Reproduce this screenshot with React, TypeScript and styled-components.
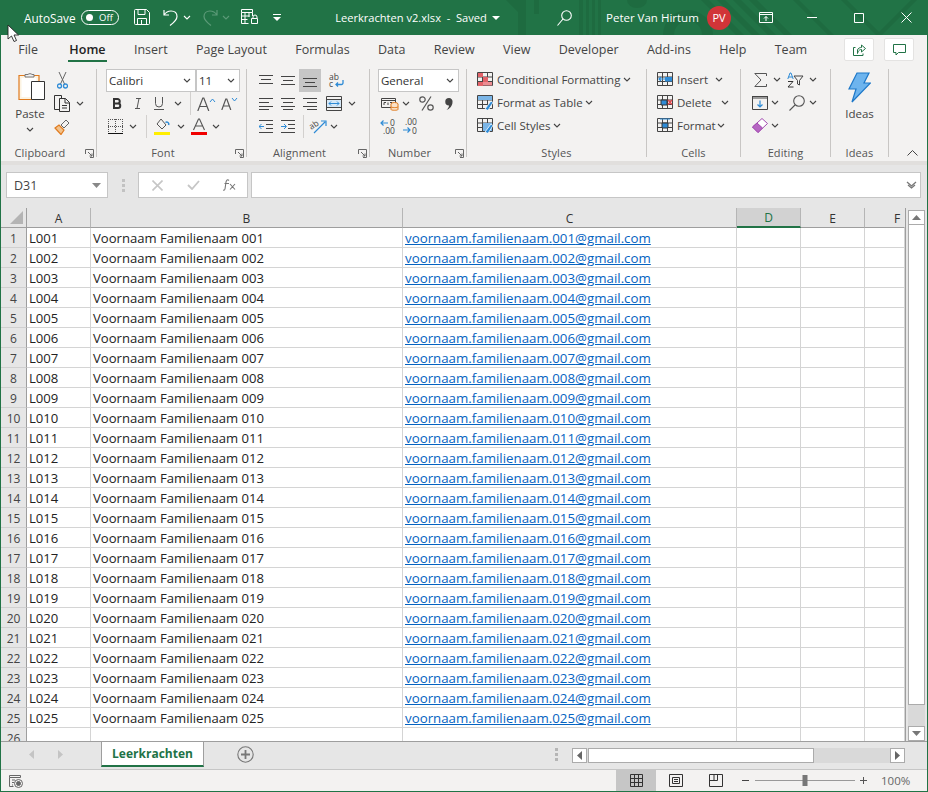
import React from "react";
import styled, { createGlobalStyle } from "styled-components";

const Global = createGlobalStyle`
  html, body { margin: 0; padding: 0; background: #217346; }
  * { box-sizing: border-box; }
`;
const GREEN = "#217346";
const INK = "#444444";
const BLUE = "#2e8bd6";
const ORANGE = "#e07b1f";
const UI_FONT = `"Open Sans", "Noto Sans", sans-serif`;

const Window = styled.div`
  position: relative; width: 928px; height: 792px; display: flex; flex-direction: column;
  border: 1px solid ${GREEN}; border-top: 0; overflow: hidden; background: #e6e6e6;
  font-family: ${UI_FONT}; color: #333;
`;
const TitleBar = styled.header`
  position: relative; flex: none; height: 35px; background: ${GREEN}; color: #fff;
  display: flex; align-items: center; white-space: nowrap;
`;
const TitleArt = styled.svg`position: absolute; left: 0; top: 0; pointer-events: none;`;
const TitleSlot = styled.span<{ $w: number; $ml?: number }>`
  position: relative; flex: none; width: ${p => p.$w}px; margin-left: ${p => p.$ml ?? 0}px;
  display: flex; align-items: center; justify-content: center;
`;
const AutoSaveLabel = styled.span`
  flex: none; width: 57px; margin-left: 23px; font-size: 11.8px; font-weight: 500;
`;
const Toggle = styled.span`
  flex: none; width: 38px; height: 15px; border: 1px solid #fff; border-radius: 8px;
  display: flex; align-items: center; padding: 0 4px; gap: 6px; font-size: 9.5px;
  &::before { content: ""; width: 7px; height: 7px; border-radius: 50%; background: #fff; }
`;
const DocTitle = styled.span`
  position: relative; flex: none; width: 152px; margin-left: 47px; font-size: 11.1px; text-align: center;
`;
const UserName = styled.span`
  position: relative; flex: none; width: 90px; margin-left: 30px; font-size: 11.5px;
`;
const Avatar = styled.span`
  position: relative; flex: none; width: 24px; height: 24px; margin-left: 11px; border-radius: 50%; background: #d13438;
  display: flex; align-items: center; justify-content: center; font-size: 11px;
`;
const TabStrip = styled.nav`
  flex: none; height: 27px; background: #f3f2f1; display: flex; align-items: flex-start; padding: 0 13px 0 3px;
`;
const TabItem = styled.span<{ $on?: boolean }>`
  position: relative; flex: none; padding: 6px 14.2px 0; height: 27px; font-size: 12.5px; line-height: 18px;
  margin-left: ${p => (p.$on ? 3 : 0)}px;
  color: ${p => (p.$on ? "#222" : "#444")}; font-weight: ${p => (p.$on ? 600 : 400)};
  ${p => p.$on ? `&::after { content: ""; position: absolute; left: 13px; right: 13px; bottom: 0; height: 2px; background: ${GREEN}; }` : ""}
`;
const TabActions = styled.div`margin-left: auto; display: flex; gap: 10px; padding-top: 3px;`;
const TabAction = styled.span`
  width: 30px; height: 23px; background: #fff; border: 1px solid #e4e3e2; border-radius: 2px;
  display: flex; align-items: center; justify-content: center;
`;
const Ribbon = styled.section`
  flex: none; height: 99px; background: #f3f2f1; padding-top: 7px; display: flex; align-items: flex-start;
`;
const Group = styled.div<{ $w: number }>`
  flex: none; width: ${p => p.$w}px; height: 88px; border-right: 1px solid #c8c6c4;
  display: flex; flex-direction: column;
`;
const GroupBody = styled.div<{ $pl?: number; $row?: boolean }>`
  height: 80px; padding-left: ${p => p.$pl ?? 0}px; display: flex; flex-direction: ${p => (p.$row ? "row" : "column")};
`;
const GroupLabel = styled.div`
  height: 8px; display: flex; align-items: center;
  font-size: 11px; line-height: 8px; color: #555; letter-spacing: .1px;
  & > span { flex: 1; text-align: center; }
`;
const LauncherSlot = styled.i`flex: none; width: 17px; display: flex; justify-content: flex-end; padding-right: 2px;`;
const ToolRow = styled.div`height: 23px; display: flex; align-items: center; flex: none;`;
const CommandRow = styled(ToolRow)`padding-bottom: 2px;`;
const Tool = styled.span<{ $w: number; $on?: boolean }>`
  flex: none; width: ${p => p.$w}px; height: 23px; display: flex; align-items: center; justify-content: center;
  background: ${p => (p.$on ? "#c6c6c6" : "transparent")};
`;
const ChevSlot = styled.span<{ $w?: number; $ml?: number }>`
  flex: none; width: ${p => p.$w ?? 10}px; margin-left: ${p => p.$ml ?? 0}px; height: 23px; display: flex; align-items: center; justify-content: center;
`;
const VSep = styled.span`flex: none; width: 8px; height: 23px; display: flex; justify-content: center;
  &::before { content: ""; width: 1px; background: #d2d0ce; }
`;
const Select = styled.span<{ $w: number }>`
  flex: none; width: ${p => p.$w}px; height: 23px; background: #fff; border: 1px solid #c6c6c6; padding: 0 4px 0 2px;
  display: flex; align-items: center; justify-content: space-between; font-size: 11.5px; color: #333;
`;
const CommandText = styled.span`font-size: 11.5px; color: #444; margin-left: 3px; white-space: nowrap;`;
const PasteColumn = styled.div`
  flex: none; width: 34px; margin-left: 12px; display: flex; flex-direction: column; align-items: center; padding-top: 3px;
  & > svg { margin-left: 4px; display: block; }
`;
const BigLabel = styled.span`font-size: 11.5px; line-height: 16px; margin-top: 3px; color: #444;`;
const ChevBelow = styled.span`margin-top: 5px; display: flex;`;
const SideTools = styled.div`flex: none; margin-left: 5px; display: flex; flex-direction: column;`;
const IdeasColumn = styled.div`
  flex: 1; display: flex; flex-direction: column; align-items: center; padding-top: 3px; & > svg { display: block; }
`;
const Collapse = styled.span`margin: 81px 0 0 auto; padding-right: 9px; display: flex;`;
const Band = styled.div`flex: none; height: 4px; background: #e1dfdd;`;
const FormulaRow = styled.div`
  flex: none; height: 43px; padding: 7px 6px 0 5px; display: flex; align-items: flex-start; background: #e6e6e6;
`;
const NameBox = styled.div`
  flex: none; width: 102px; height: 26px; background: #fff; border: 1px solid #c6c6c6; padding: 0 6px 0 7px;
  display: flex; align-items: center; justify-content: space-between; font-size: 12.5px; color: #444;
`;
const Grip = styled.span`flex: none; width: 30px; height: 26px; display: flex; align-items: center; justify-content: center;`;
const FormulaButtons = styled.div`
  flex: none; width: 110px; height: 26px; background: #fff; border: 1px solid #c6c6c6; display: grid; grid-template-columns: 36px 36px 36px;
  align-items: center; justify-items: center;
`;
const FormulaInput = styled.div`
  flex: 1; height: 26px; margin-left: 3px; background: #fff; border: 1px solid #c6c6c6; padding-right: 3px;
  display: flex; align-items: center; justify-content: flex-end;
`;
const SheetArea = styled.main`flex: 1; min-height: 0; display: flex; background: #e6e6e6;`;
const SheetGrid = styled.div`
  flex: none; width: 905px; overflow: hidden; display: grid; align-content: start;
  grid-template-columns: 26px 64px 312px 334px 64px 64px 40px; grid-auto-rows: 20px;
  border-right: 1px solid #9e9e9e;
`;
const Corner = styled.div`
  background: #e6e6e6; border-right: 1px solid #9e9e9e; border-bottom: 1px solid #9e9e9e;
  display: flex; align-items: flex-end; justify-content: flex-end; padding: 0 3px 3px 0;
`;
const ColHead = styled.div<{ $on?: boolean; $last?: boolean }>`
  background: ${p => (p.$on ? "#d2d2d2" : "#e6e6e6")};
  border-right: 1px solid ${p => (p.$last ? "transparent" : "#b5b5b5")};
  border-bottom: ${p => (p.$on ? `2px solid ${GREEN}` : "1px solid #9e9e9e")};
  display: flex; align-items: center; justify-content: ${p => (p.$last ? "flex-start" : "center")};
  padding: 1px 0 0 ${p => (p.$last ? 29 : 0)}px;
  font-size: 12px; color: ${p => (p.$on ? GREEN : "#333")};
`;
const RowHead = styled.div`
  background: #e6e6e6; border-right: 1px solid #9e9e9e; border-bottom: 1px solid #d0d0d0;
  display: flex; align-items: center; justify-content: center; font-size: 12px; color: #444; padding-top: 1px;
`;
const Cell = styled.div`
  background: #fff; border-right: 1px solid #d4d4d4; border-bottom: 1px solid #d4d4d4; padding: 1px 0 0 2px;
  font-size: 13.1px; line-height: 19px; color: #222; white-space: nowrap; overflow: hidden;
`;
const MailCell = styled(Cell)`color: #0563c1; text-decoration: underline; font-size: 13.3px;`;
const VScroll = styled.aside`
  flex: none; width: 17px; margin: 2px 0 0 2px; display: flex; flex-direction: column; background: #d9d9d9;
`;
const ScrollBtn = styled.span<{ $w?: number; $h?: number }>`
  flex: none; width: ${p => (p.$w ? `${p.$w}px` : "auto")}; height: ${p => (p.$h ? `${p.$h}px` : "auto")};
  background: #fff; border: 1px solid #ababab; display: flex; align-items: center; justify-content: center;
`;
const VThumb = styled.span`flex: none; height: 480px; background: #fff; border: 1px solid #ababab; border-top: 0;`;
const VTrack = styled.span`flex: 1;`;
const SheetTabs = styled.div`
  flex: none; height: 28px; border-top: 1px solid #9e9e9e; background: #e6e6e6; display: flex; align-items: flex-start;
`;
const NavArrows = styled.div`flex: none; width: 100px; height: 25px; padding-left: 28px; display: flex; gap: 24px; align-items: center;`;
const SheetTab = styled.div`
  flex: none; width: 103px; height: 25px; background: #fff; border-left: 1px solid #9e9e9e; border-right: 1px solid #9e9e9e; border-bottom: 2px solid ${GREEN};
  display: flex; align-items: center; justify-content: center; font-size: 12px; font-weight: 700; color: ${GREEN};
`;
const AddSheet = styled.span`flex: none; margin-left: 33px; height: 25px; display: flex; align-items: center;`;
const TabGrip = styled.span`flex: none; margin-left: 292px; width: 20px; height: 25px; display: flex; align-items: center; justify-content: center;`;
const HScroll = styled.div`
  flex: none; width: 333px; height: 15px; margin: 6px 0 0 6px; display: flex; background: #d9d9d9;
`;
const HThumb = styled.span`flex: none; width: 226px; margin-left: 1px; background: #fff; border: 1px solid #ababab;`;
const StatusBar = styled.footer`
  flex: none; height: 22px; background: #f3f2f1; border-top: 1px solid #c6c6c6; display: flex; align-items: stretch; padding-left: 8px;
`;
const StatusIcon = styled.span`flex: none; width: 16px; display: flex; align-items: center;`;
const ViewBtn = styled.span<{ $on?: boolean; $ml?: number }>`
  flex: none; width: 40px; margin-left: ${p => p.$ml ?? 0}px; display: flex; align-items: center; justify-content: center;
  background: ${p => (p.$on ? "#c6c6c6" : "transparent")};
`;
const ZoomArea = styled.div`flex: none; width: 127px; margin-left: 4px; display: flex; align-items: center;`;
const ZoomText = styled.span`flex: none; margin-left: 14px; font-size: 11.5px; color: #666; align-self: center;`;
const Pointer = styled.svg`position: absolute; left: 6px; top: 24px; pointer-events: none;`;
const GlyphIcon = styled.svg`overflow: visible;`;
const GlyphText = styled.text`font-family: ${UI_FONT}; fill: #444; stroke: none; font-size: 8.5px;`;

/* ---------- drawings ---------- */
const Chev = ({ c = INK }: { c?: string }) => (
  <svg width="8" height="5" viewBox="0 0 8 5"><path d="M1 1l3 3 3-3" fill="none" stroke={c} strokeWidth="1.1" /></svg>
);
const Launcher = () => (
  <LauncherSlot>
    <svg width="9" height="9" viewBox="0 0 9 9" fill="none" stroke="#666"><path d="M.5 5V.5H8.5V8.5H5M3 3l4 4M7 4.500V7H4.500" /></svg>
  </LauncherSlot>
);
const I = ({ w = 16, h = 16, children }: { w?: number; h?: number; children: React.ReactNode }) => (
  <svg width={w} height={h} viewBox={`0 0 ${w} ${h}`} fill="none" stroke={INK} strokeWidth="1">{children}</svg>
);
const Lines = ({ ys, widths }: { ys: number[]; widths: [number, number][] }) => (
  <I w={15} h={15}>{ys.map((y, i) => <path key={i} d={`M${widths[i][0]} ${y + .5}H${widths[i][1]}`} />)}</I>
);
const SheetGlyph = ({ children }: { children?: React.ReactNode }) => (
  <I w={17} h={15}>
    <path d="M.5.5h15v13H.5zM.5 5h15M.5 9.500h15M5.500.5v13M10.500.5v13" />
    {children}
  </I>
);
const Brush = () => <path d="M8 14l6-8 2 1.500-5 8z" fill={BLUE} stroke="#fff" strokeWidth=".8" />;
const Kinds = {
  cond: <SheetGlyph><path d="M1 1h5v4H1zM6 5h5v5H6zM1 10h5v4H1z" fill="#e2636a" stroke="none" /><path d="M6 10h9v3.500H6z" fill="#ec8d93" stroke="none" /></SheetGlyph>,
  table: <SheetGlyph><path d="M1 1h14v4H1z" fill="#7bb5e6" stroke="none" /><Brush /></SheetGlyph>,
  cell: <SheetGlyph><path d="M6 5h9v8H6z" fill="#7bb5e6" stroke="none" /><Brush /></SheetGlyph>,
};

const TitleBg = () => (
  <TitleArt width="928" height="35" viewBox="0 0 928 35" fill="#1e6b40">
    <path d="M505 0l12 12V0zM517 0h8v35h-8zM533 0h5v14h-5zM578 0h4v35h-4zM585 0h3v35h-3zM591 0h3v35h-3zM597 0h3v35h-3z" />
    <path d="M626 0h20a10 8 0 0 1-20 0z" />
    <path d="M687 10a25 25 0 0 0-25 25h11a14 14 0 0 1 28 0h11a25 25 0 0 0-25-25z" />
    <path d="M700 0h8l35 35h-8zM716 0h8l35 35h-8zM732 0h8l35 35h-8zM748 0h8l35 35h-8zM792 0h6l35 35h-6zM840 0h6l35 35h-6z" />
    <path d="M875 35l35-35h6l-35 35z" />
  </TitleArt>
);

const rows = Array.from({ length: 25 }, (_, i) => String(i + 1).padStart(3, "0"));
const cols = ["A", "B", "C", "D", "E", "F"];
const tabs = ["File", "Home", "Insert", "Page Layout", "Formulas", "Data", "Review", "View", "Developer", "Add-ins", "Help", "Team"];

const ArrowV = ({ up }: { up?: boolean }) => (
  <svg width="9" height="5" viewBox="0 0 9 5"><path d={up ? "M0 5l4.500-5L9 5z" : "M0 0l4.500 5L9 0z"} fill="#777" /></svg>
);
const ArrowH = ({ left, c = "#777" }: { left?: boolean; c?: string }) => (
  <svg width="5" height="9" viewBox="0 0 5 9"><path d={left ? "M5 0L0 4.500 5 9z" : "M0 0l5 4.500L0 9z"} fill={c} /></svg>
);
const Dots = ({ c = "#b5b5b5" }: { c?: string }) => (
  <svg width="3" height="13" viewBox="0 0 3 13" fill={c}><path d="M0 0h3v3H0zM0 5h3v3H0zM0 10h3v3H0z" /></svg>
);

export default function App() {
  return (
    <Window>
      <Global />
      <TitleBar>
        <TitleBg />
        <AutoSaveLabel>AutoSave</AutoSaveLabel>
        <Toggle>Off</Toggle>
        <TitleSlot $w={24} $ml={11}>
          <svg width="16" height="17" viewBox="0 0 16 17" fill="none" stroke="#fff"><path d="M.5 1.500a1 1 0 0 1 1-1h11l3 3v11a1 1 0 0 1-1 1h-13a1 1 0 0 1-1-1zM4 .5v5h7v-5M3.500 15.500v-6h9v6M7.500 11v4.500" /></svg>
        </TitleSlot>
        <TitleSlot $w={23} $ml={5}>
          <svg width="16" height="17" viewBox="0 0 16 17" fill="none" stroke="#fff" strokeWidth="1.200"><path d="M1 1v5h5M1 6c2-3 4-4 7-4 4 0 6 2.500 6 5.500 0 3-3 6-7 9" /></svg>
        </TitleSlot>
        <TitleSlot $w={10}><Chev c="#fff" /></TitleSlot>
        <TitleSlot $w={22} $ml={7}>
          <svg width="16" height="17" viewBox="0 0 16 17" fill="none" stroke="#5c9a78" strokeWidth="1.200"><path d="M15 1v5h-5M15 6c-2-3-4-4-7-4-4 0-6 2.500-6 5.500 0 3 3 6 7 9" /></svg>
        </TitleSlot>
        <TitleSlot $w={10}><Chev c="#5c9a78" /></TitleSlot>
        <TitleSlot $w={22} $ml={7}>
          <svg width="17" height="17" viewBox="0 0 17 17" fill="none" stroke="#fff"><path d="M.5.5h11v3h-11zM.5 3.500v11h7M.5 7h8M.5 10.500h6M4 3.500v11M8 3.500V8M11.500 3.500V7M12 9V8a2 2 0 0 1 4 0v1M10.500 9.500h6v5h-6z" /></svg>
        </TitleSlot>
        <TitleSlot $w={22} $ml={6}>
          <svg width="8" height="8" viewBox="0 0 8 8" fill="#fff"><path d="M0 0h8v1H0zM0 3h8L4 7z" /></svg>
        </TitleSlot>
        <DocTitle>Leerkrachten v2.xlsx&nbsp; -&nbsp; Saved</DocTitle>
        <TitleSlot $w={10} $ml={4}>
          <svg width="8" height="4" viewBox="0 0 8 4" fill="#fff"><path d="M0 0h8L4 4z" /></svg>
        </TitleSlot>
        <TitleSlot $w={23} $ml={52}>
          <svg width="15" height="16" viewBox="0 0 15 16" fill="none" stroke="#fff" strokeWidth="1.100"><circle cx="9.500" cy="5.500" r="4.800" /><path d="M6 9l-5.500 6.500" /></svg>
        </TitleSlot>
        <UserName>Peter Van Hirtum</UserName>
        <Avatar>PV</Avatar>
        <TitleSlot $w={22} $ml={24}>
          <svg width="14" height="11" viewBox="0 0 14 11" fill="none" stroke="#fff"><path d="M.5.5h13v10H.5zM.5 2.500h13M7 9V4.500M5 6.500l2-2 2 2" /></svg>
        </TitleSlot>
        <TitleSlot $w={24} $ml={23}>
          <svg width="10" height="1" viewBox="0 0 10 1"><path d="M0 0h10v1H0z" fill="#fff" /></svg>
        </TitleSlot>
        <TitleSlot $w={24} $ml={23}>
          <svg width="10" height="10" viewBox="0 0 10 10" fill="none" stroke="#fff"><path d="M.5.5h9v9h-9z" /></svg>
        </TitleSlot>
        <TitleSlot $w={24} $ml={23}>
          <svg width="11" height="11" viewBox="0 0 11 11" fill="none" stroke="#fff"><path d="M.5.5l10 10M10.500.5l-10 10" /></svg>
        </TitleSlot>
      </TitleBar>

      <TabStrip>
        {tabs.map(t => <TabItem key={t} $on={t === "Home"}>{t}</TabItem>)}
        <TabActions>
          <TabAction>
            <svg width="13" height="13" viewBox="0 0 13 13" fill="none" stroke={GREEN}><path d="M4.500 10.500V7C5 5 7 4.500 8.500 4.500V2l4 3.500-4 3.500V6.500c-1.500 0-3 .5-4 4zM10 10.500v2H.5v-8h2" /></svg>
          </TabAction>
          <TabAction>
            <svg width="13" height="12" viewBox="0 0 13 12" fill="none" stroke={GREEN}><path d="M.5.5h12v8H5.500l-2.500 2.500V8.500H.5z" /></svg>
          </TabAction>
        </TabActions>
      </TabStrip>

      <Ribbon>
        <Group $w={96}>
          <GroupBody $row>
            <PasteColumn>
              <svg width="28" height="31" viewBox="0 0 28 31" fill="none">
                <path d="M1 3.500h20v24H1z" fill="#fcf3e2" stroke={ORANGE} strokeWidth="1.200" />
                <path d="M3.500 6h15v19h-15z" fill="#fff" />
                <path d="M7 5V2.500h3a2.500 2 0 0 1 4 0h2V5z" fill="#f3f2f1" stroke="#777" />
                <path d="M13.500 9.500h13v18h-13z" fill="#fff" stroke="#333" />
              </svg>
              <BigLabel>Paste</BigLabel>
              <ChevBelow><Chev /></ChevBelow>
            </PasteColumn>
            <SideTools>
              <ToolRow>
                <Tool $w={20}>
                  <svg width="11" height="17" viewBox="0 0 11 17" fill="none"><path d="M2 0l5.500 12M9 0L3.500 12" stroke="#666" /><circle cx="2.500" cy="14" r="2" stroke={BLUE} strokeWidth="1.300" /><circle cx="8.500" cy="14" r="2" stroke={BLUE} strokeWidth="1.300" /></svg>
                </Tool>
              </ToolRow>
              <ToolRow>
                <Tool $w={20}>
                  <svg width="16" height="17" viewBox="0 0 16 17" fill="none" stroke="#333"><path d="M5.500 14.500h-5V.5h7v3M5.500 3.500h6l4 4v9h-10zM11 3.500V8h4.500M8 10.500h5M8 13h5" /></svg>
                </Tool>
                <ChevSlot $w={15}><Chev /></ChevSlot>
              </ToolRow>
              <ToolRow>
                <Tool $w={20}>
                  <svg width="16" height="16" viewBox="0 0 16 16" fill="none"><path d="M1 9l4-3 5 5-3 4.500z" fill="#f2c28c" stroke={ORANGE} strokeWidth="1.200" /><path d="M7 6l5-5 3 3-5 5z" stroke="#666" /></svg>
                </Tool>
              </ToolRow>
            </SideTools>
          </GroupBody>
          <GroupLabel><span>Clipboard</span><Launcher /></GroupLabel>
        </Group>

        <Group $w={150}>
          <GroupBody $pl={9}>
            <ToolRow>
              <Select $w={90}>Calibri<Chev /></Select>
              <Select $w={44}>11<Chev /></Select>
            </ToolRow>
            <ToolRow>
              <Tool $w={21}><svg width="10" height="11" viewBox="0 0 10 11" fill="none" stroke="#333" strokeWidth="2"><path d="M2 1v9M1 1h4.500a2 2 0 0 1 0 4.500H2M2 5.500h4a2.200 2.200 0 0 1 0 4.500H1" /></svg></Tool>
              <Tool $w={21}><svg width="8" height="11" viewBox="0 0 8 11" fill="none" stroke="#555"><path d="M2 .5h5M1 10.500h5M5 .5L3 10.500" /></svg></Tool>
              <Tool $w={21}><svg width="10" height="13" viewBox="0 0 10 13" fill="none" stroke="#555"><path d="M1.500 0v6.500a3.500 3.500 0 0 0 7 0V0M0 12.500h10" /></svg></Tool>
              <ChevSlot $w={17}><Chev /></ChevSlot>
              <VSep />
              <Tool $w={24}><svg width="19" height="14" viewBox="0 0 19 14" fill="none"><path d="M.8 14l5-13h1l5 13M3 9.500h7" stroke="#555" strokeWidth="1.200" /><path d="M13 5l2.500-3L18 5" stroke={BLUE} /></svg></Tool>
              <Tool $w={22}><svg width="17" height="13" viewBox="0 0 17 13" fill="none"><path d="M.8 13l4-11h1l4 11M2.500 9h6" stroke="#555" strokeWidth="1.200" /><path d="M11 1l2.500 3L16 1" stroke={BLUE} /></svg></Tool>
            </ToolRow>
            <ToolRow>
              <Tool $w={18}><svg width="15" height="15" viewBox="0 0 15 15" fill="none" stroke="#555" strokeDasharray="1 1"><path d="M.5 0v14M14.500 0v14M7.500 0v14M0 .5h15M0 7.500h15" /><path d="M0 14.500h15" stroke="#111" strokeDasharray="none" /></svg></Tool>
              <ChevSlot $w={18}><Chev /></ChevSlot>
              <VSep />
              <Tool $w={24}><svg width="16" height="17" viewBox="0 0 16 17" fill="none"><path d="M7 1l5 6-4 4-5-5z" stroke="#555" /><path d="M11.500 4.500a2 2 0 0 1 3 2.500" stroke={BLUE} strokeWidth="1.500" /><path d="M0 14h16v3H0z" fill="#ffee00" /></svg></Tool>
              <ChevSlot $w={13}><Chev /></ChevSlot>
              <Tool $w={24}><svg width="16" height="17" viewBox="0 0 16 17" fill="none"><path d="M2.500 12l5-11h1l5 11M4.500 8h7" stroke="#555" strokeWidth="1.100" /><path d="M0 14h16v3H0z" fill="#f00000" /></svg></Tool>
              <ChevSlot $w={10}><Chev /></ChevSlot>
            </ToolRow>
          </GroupBody>
          <GroupLabel><span>Font</span><Launcher /></GroupLabel>
        </Group>

        <Group $w={123}>
          <GroupBody $pl={8}>
            <ToolRow>
              <Tool $w={22}><Lines ys={[2, 6, 10]} widths={[[0, 14], [2, 12], [0, 14]]} /></Tool>
              <Tool $w={22}><Lines ys={[3, 7, 11]} widths={[[0, 14], [2, 12], [0, 14]]} /></Tool>
              <Tool $w={22} $on><Lines ys={[5, 9, 13]} widths={[[0, 14], [2, 12], [0, 14]]} /></Tool>
              <Tool $w={30}>
                <GlyphIcon width="15" height="17" viewBox="0 0 15 17" fill="none">
                  <GlyphText><tspan x="0" y="7.500">ab</tspan><tspan x="0" y="15">c</tspan></GlyphText>
                  <path d="M14 8v3a1.500 1.500 0 0 1-1.500 1.500H7M9 10.500l-2 2 2 2" stroke={BLUE} strokeWidth="1.300" />
                </GlyphIcon>
              </Tool>
            </ToolRow>
            <ToolRow>
              <Tool $w={22}><Lines ys={[2, 6, 10, 13]} widths={[[0, 14], [0, 10], [0, 14], [0, 10]]} /></Tool>
              <Tool $w={22}><Lines ys={[2, 6, 10, 13]} widths={[[0, 14], [2, 12], [0, 14], [2, 12]]} /></Tool>
              <Tool $w={22}><Lines ys={[2, 6, 10, 13]} widths={[[0, 14], [4, 14], [0, 14], [4, 14]]} /></Tool>
              <Tool $w={26}>
                <svg width="16" height="15" viewBox="0 0 16 15" fill="none"><path d="M.5.5h15v14H.5zM.5 3.500h15M.5 11.500h15" stroke="#444" /><path d="M1 4h14v7H1z" fill="#d6e8f7" /><path d="M3 7.500h10M5 5.500l-2 2 2 2M11 5.500l2 2-2 2" stroke={BLUE} /></svg>
              </Tool>
              <ChevSlot><Chev /></ChevSlot>
            </ToolRow>
            <ToolRow>
              <Tool $w={22}>
                <svg width="15" height="14" viewBox="0 0 15 14" fill="none"><path d="M0 .5h14M7 4.500h7M7 8.500h7M0 12.500h14" stroke="#444" /><path d="M5 6.500H0M2.500 4l-2.500 2.500L2.500 9" stroke={BLUE} /></svg>
              </Tool>
              <Tool $w={22}>
                <svg width="15" height="14" viewBox="0 0 15 14" fill="none"><path d="M0 .5h14M7 4.500h7M7 8.500h7M0 12.500h14" stroke="#444" /><path d="M0 6.500h5M3 4l2.500 2.500L3 9" stroke={BLUE} /></svg>
              </Tool>
              <VSep />
              <Tool $w={22}>
                <GlyphIcon width="17" height="15" viewBox="0 0 17 15" fill="none">
                  <GlyphText x="0" y="9" transform="rotate(-35 4 8)">ab</GlyphText>
                  <path d="M4 14L15 3M11 2h5v5" stroke={BLUE} strokeWidth="1.200" />
                </GlyphIcon>
              </Tool>
              <ChevSlot><Chev /></ChevSlot>
            </ToolRow>
          </GroupBody>
          <GroupLabel><span>Alignment</span><Launcher /></GroupLabel>
        </Group>

        <Group $w={97}>
          <GroupBody $pl={8}>
            <ToolRow><Select $w={81}>General<Chev /></Select></ToolRow>
            <ToolRow>
              <Tool $w={23}>
                <svg width="18" height="15" viewBox="0 0 18 15" fill="none"><path d="M.5 2.500h14v9H.5zM.5 4.500h14" stroke="#444" /><path d="M3 9V6.500h2M7 9V6.500M9 6.500h2" stroke="#444" /><ellipse cx="13.500" cy="8" rx="3.500" ry="1.500" fill="#fbe2c8" stroke={ORANGE} /><path d="M10 8v5.500c0 1 7 1 7 0V8M10 10.800c0 1 7 1 7 0" fill="#fbe2c8" stroke={ORANGE} /></svg>
              </Tool>
              <ChevSlot><Chev /></ChevSlot>
              <Tool $w={30}>
                <svg width="15" height="15" viewBox="0 0 15 15" fill="none" stroke="#555" strokeWidth="1.200"><circle cx="3.500" cy="3.500" r="2.700" /><circle cx="11.500" cy="11.500" r="2.700" /><path d="M12 .5L3 14.500" /></svg>
              </Tool>
              <Tool $w={16}>
                <svg width="8" height="12" viewBox="0 0 8 12"><path d="M4 0a3.500 3.500 0 0 1 3.500 4c0 4-3 7-6 8 1.500-1.500 2.500-3 2.500-4.500A3.700 3.700 0 0 1 4 0z" fill="#444" /></svg>
              </Tool>
            </ToolRow>
            <ToolRow>
              <Tool $w={22}>
                <GlyphIcon width="18" height="17" viewBox="0 0 18 17" fill="none">
                  <path d="M8 5H1M3.500 2.500L1 5l2.500 2.500" stroke={BLUE} strokeWidth="1.200" />
                  <GlyphText><tspan x="10" y="8">0</tspan><tspan x="3" y="16">.00</tspan></GlyphText>
                </GlyphIcon>
              </Tool>
              <Tool $w={22}>
                <GlyphIcon width="18" height="17" viewBox="0 0 18 17" fill="none">
                  <path d="M1 12h7M5.500 9.500L8 12l-2.500 2.500" stroke={BLUE} strokeWidth="1.200" />
                  <GlyphText><tspan x="3" y="7">.00</tspan><tspan x="10" y="16">0</tspan></GlyphText>
                </GlyphIcon>
              </Tool>
            </ToolRow>
          </GroupBody>
          <GroupLabel><span>Number</span><Launcher /></GroupLabel>
        </Group>

        <Group $w={180}>
          <GroupBody $pl={10}>
            <CommandRow>{Kinds.cond}<CommandText>Conditional Formatting</CommandText><ChevSlot $w={14}><Chev /></ChevSlot></CommandRow>
            <CommandRow>{Kinds.table}<CommandText>Format as Table</CommandText><ChevSlot $w={12}><Chev /></ChevSlot></CommandRow>
            <CommandRow>{Kinds.cell}<CommandText>Cell Styles</CommandText><ChevSlot $w={12}><Chev /></ChevSlot></CommandRow>
          </GroupBody>
          <GroupLabel><span>Styles</span></GroupLabel>
        </Group>

        <Group $w={94}>
          <GroupBody $pl={10}>
            <CommandRow>
              <SheetGlyph><path d="M8 5h7v4.500H8z" fill={BLUE} stroke="none" /><path d="M8 7H2M4 5L2 7l2 2" stroke={BLUE} strokeWidth="1.200" fill="#fff" /></SheetGlyph>
              <CommandText>Insert</CommandText><ChevSlot $ml={6}><Chev /></ChevSlot>
            </CommandRow>
            <CommandRow>
              <SheetGlyph><path d="M4 5h6v5H4z" fill={BLUE} stroke="#333" /><path d="M11 5l4 4.500M15 5l-4 4.500" stroke="#e2464c" strokeWidth="1.400" /></SheetGlyph>
              <CommandText>Delete</CommandText><ChevSlot $ml={8}><Chev /></ChevSlot>
            </CommandRow>
            <CommandRow>
              <SheetGlyph><path d="M5 5h6v5H5z" fill={BLUE} stroke="#333" /><path d="M3 1h10" stroke={BLUE} /></SheetGlyph>
              <CommandText>Format</CommandText><ChevSlot $ml={0}><Chev /></ChevSlot>
            </CommandRow>
          </GroupBody>
          <GroupLabel><span>Cells</span></GroupLabel>
        </Group>

        <Group $w={90}>
          <GroupBody $pl={10}>
            <CommandRow>
              <Tool $w={18}><svg width="13" height="14" viewBox="0 0 13 14" fill="none" stroke="#555"><path d="M12.500 3V.5H.8L7 7 .8 13.500h11.700V11" /></svg></Tool>
              <ChevSlot $w={16}><Chev /></ChevSlot>
              <Tool $w={21}>
                <svg width="17" height="16" viewBox="0 0 17 16" fill="none"><path d="M.8 7L3 1h1l2.200 6M1.500 5h4" stroke={BLUE} /><path d="M1 9.500h5l-5 5.500h5.500" stroke="#333" /><path d="M7 4h9l-3.500 4.500V13l-2-1V8.500z" stroke="#444" /></svg>
              </Tool>
              <ChevSlot $w={14}><Chev /></ChevSlot>
            </CommandRow>
            <CommandRow>
              <Tool $w={18}><svg width="16" height="14" viewBox="0 0 16 14" fill="none"><path d="M.5.5h15v13H.5z" stroke="#444" /><path d="M0 .5h16M0 2h16" stroke="#444" /><path d="M8 4.500v6.500M5.500 8.500L8 11l2.500-2.500" stroke={BLUE} strokeWidth="1.200" /></svg></Tool>
              <ChevSlot $w={12}><Chev /></ChevSlot>
              <ChevSlot $w={4} />
              <Tool $w={23}>
                <svg width="16" height="16" viewBox="0 0 16 16" fill="none" stroke="#555" strokeWidth="1.100"><circle cx="10" cy="6" r="5.300" /><path d="M6 10L.5 15.500" /></svg>
              </Tool>
              <ChevSlot><Chev /></ChevSlot>
            </CommandRow>
            <CommandRow>
              <Tool $w={18}><svg width="16" height="15" viewBox="0 0 16 15"><path d="M10 .5l5.500 5L6 14.500.5 9z" fill="#fff" stroke="#a24bb0" /><path d="M5 5l5.500 5-4.500 4.500L.5 9z" fill="#b565c2" stroke="#a24bb0" /></svg></Tool>
              <ChevSlot $w={12}><Chev /></ChevSlot>
            </CommandRow>
          </GroupBody>
          <GroupLabel><span>Editing</span></GroupLabel>
        </Group>

        <Group $w={58}>
          <GroupBody>
            <IdeasColumn>
              <svg width="23" height="31" viewBox="0 0 23 31"><path d="M9 1h12l-5 10h6.500L4 30l4-13H1z" fill="#6db4ee" stroke="#1e78c8" strokeWidth="1.200" /></svg>
              <BigLabel>Ideas</BigLabel>
            </IdeasColumn>
          </GroupBody>
          <GroupLabel><span>Ideas</span></GroupLabel>
        </Group>
        <Collapse>
          <svg width="11" height="6" viewBox="0 0 11 6"><path d="M.5 5.500l5-5 5 5" fill="none" stroke={INK} /></svg>
        </Collapse>
      </Ribbon>
      <Band />

      <FormulaRow>
        <NameBox>D31<svg width="9" height="5" viewBox="0 0 9 5"><path d="M0 0h9L4.500 5z" fill="#888" /></svg></NameBox>
        <Grip><Dots c="#c2c2c2" /></Grip>
        <FormulaButtons>
          <svg width="11" height="11" viewBox="0 0 11 11"><path d="M.5.5l10 10M10.500.5l-10 10" stroke="#c6c6c6" strokeWidth="1.600" /></svg>
          <svg width="13" height="10" viewBox="0 0 13 10"><path d="M1 5l4 4 7-8" fill="none" stroke="#c6c6c6" strokeWidth="1.800" /></svg>
          <svg width="13" height="12" viewBox="0 0 13 12" fill="none" stroke="#777" strokeWidth="1.100"><path d="M6 1.500C4.500 0 3.500 1 3 3L2 10c-.2 1-1 1.500-2 1M1.500 4.500h4.500M7 5l5 5.500M12 5l-5 5.500" /></svg>
        </FormulaButtons>
        <FormulaInput>
          <svg width="11" height="8" viewBox="0 0 11 8"><path d="M1 1l4.500 4L10 1M2 4l3.500 3L9 4" fill="none" stroke="#777" strokeWidth="1.300" /></svg>
        </FormulaInput>
      </FormulaRow>

      <SheetArea>
        <SheetGrid>
          <Corner><svg width="13" height="13" viewBox="0 0 13 13"><path d="M13 0v13H0z" fill="#b4b4b4" /></svg></Corner>
          {cols.map(c => <ColHead key={c} $on={c === "D"} $last={c === "F"}>{c}</ColHead>)}
          {rows.map((r, i) => (
            <React.Fragment key={r}>
              <RowHead>{i + 1}</RowHead>
              <Cell>L{r}</Cell>
              <Cell>Voornaam Familienaam {r}</Cell>
              <MailCell>voornaam.familienaam.{r}@gmail.com</MailCell>
              <Cell /><Cell /><Cell />
            </React.Fragment>
          ))}
          <RowHead>26</RowHead>
          <Cell /><Cell /><Cell /><Cell /><Cell /><Cell />
        </SheetGrid>
        <VScroll>
          <ScrollBtn $h={15}><ArrowV up /></ScrollBtn>
          <VThumb />
          <VTrack />
          <ScrollBtn $h={15}><ArrowV /></ScrollBtn>
        </VScroll>
      </SheetArea>

      <SheetTabs>
        <NavArrows><ArrowH left c="#c4c4c4" /><ArrowH c="#c4c4c4" /></NavArrows>
        <SheetTab>Leerkrachten</SheetTab>
        <AddSheet>
          <svg width="17" height="17" viewBox="0 0 17 17" fill="none" stroke="#777"><circle cx="8.500" cy="8.500" r="7.700" strokeWidth="1.100" /><path d="M8.500 4v9M4 8.500h9" strokeWidth="1.800" /></svg>
        </AddSheet>
        <TabGrip><Dots /></TabGrip>
        <HScroll>
          <ScrollBtn $w={15}><ArrowH left c="#666" /></ScrollBtn>
          <HThumb />
          <VTrack />
          <ScrollBtn $w={15}><ArrowH c="#666" /></ScrollBtn>
        </HScroll>
      </SheetTabs>

      <StatusBar>
        <StatusIcon>
          <svg width="14" height="14" viewBox="0 0 14 14" fill="none" stroke="#666"><path d="M.5 1.500h11v2h-11zM.5 3.500v9h4M3 6h3M3 8.500h2M3 11h1" /><circle cx="9.500" cy="9.500" r="4" /><circle cx="9.500" cy="9.500" r="2" fill="#666" /></svg>
        </StatusIcon>
        <ViewBtn $on $ml={591}>
          <svg width="13" height="13" viewBox="0 0 13 13" fill="none" stroke="#333"><path d="M.5.500h12v12H.5zM4.500.5v12M8.500.5v12M.5 4.500h12M.5 8.500h12" /></svg>
        </ViewBtn>
        <ViewBtn>
          <svg width="14" height="13" viewBox="0 0 14 13" fill="none" stroke="#333"><path d="M.5.500h13v12H.5zM3.500 3.500h7v6h-7zM5 5.500h4M5 7.500h4" /></svg>
        </ViewBtn>
        <ViewBtn>
          <svg width="14" height="13" viewBox="0 0 14 13" fill="none" stroke="#333"><path d="M.5.500h13v12H.5zM.5 6.500h8M5 .5v6M8.500.5v6" /></svg>
        </ViewBtn>
        <ZoomArea>
          <svg width="127" height="11" viewBox="0 0 127 11" fill="none">
            <path d="M15 5.500h100" stroke="#999" />
            <path d="M2 5.500h7" stroke="#444" />
            <path d="M62.500 0h5v11h-5z" fill="#777" />
            <path d="M120 5.500h7M123.500 2v7" stroke="#555" />
          </svg>
        </ZoomArea>
        <ZoomText>100%</ZoomText>
      </StatusBar>

      <Pointer width="12" height="19" viewBox="0 0 12 19">
        <path d="M1 1v14l3.500-3 2.500 5.500 2.500-1-2.500-5.500h4.500z" fill="#fff" stroke="#222" strokeWidth=".9" />
      </Pointer>
    </Window>
  );
}
